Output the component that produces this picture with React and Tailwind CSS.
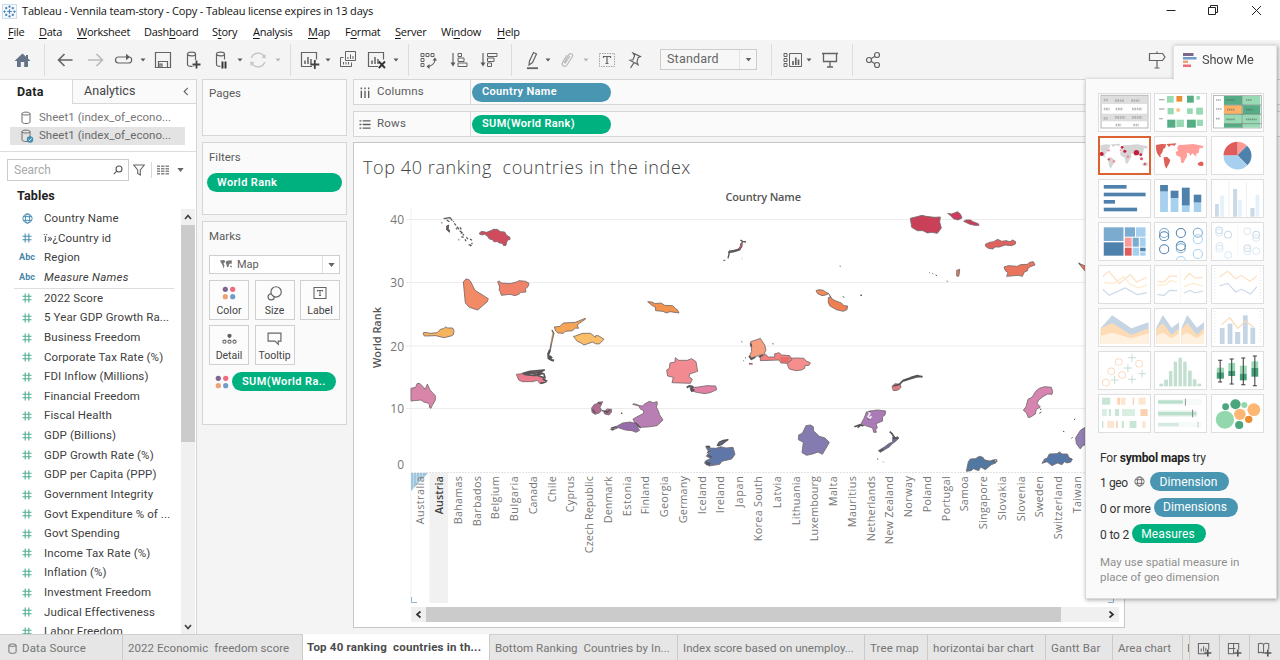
import React from "react";

const line = { fill: "none", stroke: "#636363", strokeWidth: 1.2 };

function Icon({ className = "", children }) {
  return (
    <svg viewBox="0 0 20 20" {...line} className={`h-5 w-5 flex-none ${className}`}>
      {children}
    </svg>
  );
}

function Caret({ className = "", color = "#5b5b5b" }) {
  return (
    <svg viewBox="0 0 6 4" className={`h-1 w-1.5 flex-none ${className}`}>
      <path d="M0.5 0.5H5.5L3 3.5Z" fill={color} />
    </svg>
  );
}

const Sep = ({ className = "" }) => <div className={`h-8 w-px flex-none bg-[#dcdcdc] ${className}`} />;

const MENU = [
  ["", "F", "ile", "w-[31px]"],
  ["", "D", "ata", "w-[38px]"],
  ["", "W", "orksheet", "w-[67px]"],
  ["Dash", "b", "oard", "w-[68px]"],
  ["S", "t", "ory", "w-[41px]"],
  ["", "A", "nalysis", "w-[55px]"],
  ["", "M", "ap", "w-[37px]"],
  ["F", "o", "rmat", "w-[50px]"],
  ["", "S", "erver", "w-[46px]"],
  ["Wi", "n", "dow", "w-[56px]"],
  ["", "H", "elp", "w-[40px]"],
];

function TitleBar() {
  return (
    <div className="flex h-[22px] flex-none items-center bg-white">
      <svg viewBox="0 0 16 16" className="ml-[2px] h-[15px] w-[15px]" fill="none" stroke="#4b85b8" strokeWidth="1.3">
        <rect x="0.5" y="0.5" width="15" height="15" stroke="#c9dcec" strokeWidth="1" fill="#f3f8fc" />
        <path d="M8 5.5V10.5M5.5 8H10.5M8 1.5V4M6.8 2.7H9.2M8 12V14.5M6.8 13.3H9.2M1.5 8H4M2.7 6.8V9.2M12 8H14.5M13.3 6.8V9.2M4.5 3.3V5.7M3.3 4.5H5.7M11.5 3.3V5.7M10.3 4.5H12.7M4.5 10.3V12.7M3.3 11.5H5.7M11.5 10.3V12.7M10.3 11.5H12.7" />
      </svg>
      <span className="ml-[5px] whitespace-pre font-['Open_Sans','Noto_Sans',sans-serif] text-[11px] tracking-[-0.18px] text-[#111]">
        Tableau - Vennila team-story - Copy - Tableau license expires in 13 days
      </span>
      <svg viewBox="0 0 100 20" className="ml-auto mr-[15px] h-5 w-[100px]" fill="none" stroke="#222" strokeWidth="1">
        <path d="M1.500 9.500H10.500" />
        <path d="M43.500 6.500H50.500V13.500H43.500ZM45.500 6.500V4.500H52.500V11.500H50.500" />
        <path d="M87 5L96 14M96 5L87 14" />
      </svg>
    </div>
  );
}

function MenuBar() {
  return (
    <div className="flex h-[18px] flex-none items-center bg-white pl-2 pt-[2px] font-['Open_Sans','Noto_Sans',sans-serif] text-[11px] tracking-[-0.25px] text-[#111]">
      {MENU.map(([a, u, b, w]) => (
        <div key={a + u + b} className={`${w} flex-none whitespace-pre`}>
          {a}
          <span className="underline underline-offset-2">{u}</span>
          {b}
        </div>
      ))}
    </div>
  );
}

const cylinder = "M4.500 4V14.500C4.500 17 12.500 17 12.500 14.500V4M4.500 4C4.500 1.500 12.500 1.500 12.500 4C12.500 6.500 4.500 6.500 4.500 4Z";

function Toolbar() {
  return (
    <div className="flex h-[39px] flex-none items-center bg-[#f4f4f4]">
      <Icon className="ml-[13px]">
        <path d="M9.500 3.500L1.500 11H4V17H7.800V12H11.200V17H15V11H17.500L15 8.500V5H13V6.700Z" fill="#647387" stroke="none" />
      </Icon>
      <Sep className="ml-[11px]" />
      <Icon className="ml-[10px]">
        <path d="M3.500 10H17.500M9.500 4L3.500 10L9.500 16" strokeWidth="1.600" />
      </Icon>
      <Icon className="ml-[11px]">
        <path d="M2 10H16M10.500 4L16.500 10L10.500 16" stroke="#b9b9b9" strokeWidth="1.600" />
      </Icon>
      <Icon className="ml-[8px]">
        <path d="M12.500 7H4.500C0.500 7 0.500 13 4.500 13H14.500C18.500 13 18.500 7.500 15.500 7" strokeWidth="1.200" />
        <path d="M12 3.800V10.200L16 7Z" fill="#5b5b5b" stroke="none" />
      </Icon>
      <Caret className="ml-[6px]" />
      <Icon className="ml-[7px]">
        <path d="M2.500 2.500H17.500V17.500H2.500ZM5.500 17.500V11.500H14.500V17.500M9 17V14H7V17" />
      </Icon>
      <Icon className="ml-[10px]">
        <path d={cylinder} />
        <path d="M13.500 10V19M9 14.500H18" stroke="#f4f4f4" strokeWidth="4" />
        <path d="M13.500 10.500V18.500M9.500 14.500H17.500" stroke="#444" strokeWidth="1.800" />
      </Icon>
      <Icon className="ml-[9px]">
        <path d={cylinder} />
        <path d="M8.500 9.500H16V20H8.500Z" fill="#f4f4f4" stroke="none" />
        <path d="M10.500 11.500V18.500M13.500 11.500V18.500" stroke="#333" strokeWidth="1.900" />
      </Icon>
      <Caret className="ml-[5px]" />
      <Icon className="ml-[5px]">
        <g stroke="#c4c4c4" strokeWidth="1.400">
          <path d="M3.300 8C5 2 13.500 1.500 16.300 7M16.700 12C15 18 6.500 18.500 3.700 13" />
          <path d="M17.500 4V8.500L13.500 7.500ZM2.500 16V11.500L6.500 12.500Z" fill="#c4c4c4" stroke="none" />
        </g>
      </Icon>
      <Caret className="ml-[7px]" color="#b5b5b5" />
      <Sep className="ml-[9px]" />
      <Icon className="ml-[9px]">
        <path d="M12 16.500H1.500V2.500H16.500V9.500" />
        <path d="M5 14V10.500M8 14V7M11 14V9" strokeWidth="1.500" />
        <path d="M14.800 10V19M10.300 14.500H19.300" stroke="#444" strokeWidth="1.800" />
      </Icon>
      <Caret className="ml-[5px]" />
      <Icon className="ml-[7px]">
        <path d="M7.500 1.500H17.500V10.500H7.500ZM5.500 7.500H2.500V16.500H13.500V12.500M10 9V7M12.500 9V4.500M15 9V6M5.500 14.500V12M8 14.500V12M10.500 14.500V12" strokeWidth="1" />
      </Icon>
      <Icon className="ml-[9px]">
        <path d="M11 16.500H1.500V2.500H16.500V9.500" />
        <path d="M5 14V10.500M8 14V7M11 14V9" strokeWidth="1.500" />
        <path d="M11.800 11.500L18 18M18 11.500L11.800 18" stroke="#333" strokeWidth="1.900" />
      </Icon>
      <Caret className="ml-[6px]" />
      <Sep className="ml-[9px]" />
      <Icon className="ml-[9px]">
        <path d="M3 3.500H6V6.500H3ZM8 3.500H11V6.500H8ZM13 3.500H16V6.500H13ZM3 8.500H6V11.500H3ZM3 13.500H6V16.500H3Z" strokeWidth="1" />
        <path d="M17 9C17 13 14 16 9.500 16.500" />
        <path d="M14.500 10.500L17 7.500L19 10.500ZM11.500 14L8.500 16.500L11.500 19Z" fill="#5b5b5b" stroke="none" />
      </Icon>
      <Icon className="ml-[11px]">
        <path d="M4 3V13" />
        <path d="M1.500 12.500H6.500L4 16.500Z" fill="#5b5b5b" stroke="none" />
        <path d="M9 3.500H12.500V6.500H9ZM9 8H15V11.500H9ZM9 13H18V16.500H9Z" strokeWidth="1" />
      </Icon>
      <Icon className="ml-[10px]">
        <path d="M4 3V13" />
        <path d="M1.500 12.500H6.500L4 16.500Z" fill="#5b5b5b" stroke="none" />
        <path d="M8.500 3.500H18V6.500H8.500ZM8.500 8H15V11.500H8.500ZM8.500 13H12.500V16.500H8.500Z" strokeWidth="1" />
      </Icon>
      <Sep className="ml-[12px]" />
      <Icon className="ml-[10px]">
        <path d="M7.500 11L11.500 2.500L14.500 4L10.500 12.500L7 15Z" />
        <path d="M5 18.200H16" strokeWidth="1.800" />
      </Icon>
      <Caret className="ml-[3px]" />
      <Icon className="ml-[6px]">
        <path d="M7 13L12 4.500C14 2.500 16.500 4.500 15.500 6.500L10 15C8 17.500 4 16 5.500 12.500L10 5M8 13.500L13 6" stroke="#b9b9b9" />
      </Icon>
      <Caret className="ml-[6px]" color="#b5b5b5" />
      <Icon className="ml-[8px]">
        <path d="M2.500 3.500H17.500V16.500H2.500Z" stroke="#a5a5a5" strokeWidth="1" strokeDasharray="1.500 1" />
        <path d="M6.500 8V6.500H13.500V8M10 6.500V13.500M8.500 13.500H11.500" />
      </Icon>
      <Icon className="ml-[7px]">
        <path d="M10.500 3L17 8L14.500 8.500L12.500 12.500L13 15.500L6 9.500L9 9.500L11.500 6ZM9.500 12.500L5 17" transform="rotate(-12 10 10)" />
      </Icon>
      <div className="ml-[16px] flex h-[21px] w-[97px] flex-none items-center border border-[#cccccc] bg-[#f7f7f7] pl-[6px] text-[12.500px] tracking-[0.2px] text-[#666]">
        Standard
        <div className="ml-auto flex h-full w-[17px] items-center justify-center border-l border-[#e4e4e4]">
          <svg viewBox="0 0 8 5" className="h-[4px] w-[7px]"><path d="M0.500 0H7.500L4 4.500Z" fill="#666" /></svg>
        </div>
      </div>
      <Sep className="ml-[14px]" />
      <Icon className="ml-[11px]">
        <path d="M1 3.500H4V6.500H1ZM1 8.500H4V11.500H1ZM1 13.500H4V16.500H1ZM6.500 3.500H18.500V16.500H6.500Z" strokeWidth="1" />
        <path d="M10 15V11M12.800 15V7.500M15.500 15V9.500" strokeWidth="1.700" />
      </Icon>
      <Caret className="ml-[3px]" />
      <Icon className="ml-[8px]">
        <path d="M2 3.500H18M3.500 3.500V11.500H16.500V3.500M10 11.500V16.500M7 17H13" strokeWidth="1.300" />
      </Icon>
      <Sep className="ml-[12px]" />
      <Icon className="ml-[10px]">
        <circle cx="6" cy="10" r="2.500" />
        <circle cx="14" cy="5" r="2.500" />
        <circle cx="14" cy="15" r="2.500" />
        <path d="M8 8.800L12 6.300M8 11.200L12 13.700" />
      </Icon>
      <Icon className="ml-[264px]">
        <path d="M2.500 3.500H15.500L18 7L15.500 10.500H2.500ZM10 1.500V3.500M10 10.500V18M7.500 18H12.500" />
      </Icon>
    </div>
  );
}

function Cyl({ checked }) {
  return (
    <svg viewBox="0 0 14 14" className="h-[14px] w-[14px] flex-none" fill="none" stroke="#6b6b6b">
      <path d="M2 2.700V11C2 13 10 13 10 11V2.700M2 2.700C2 0.600 10 0.600 10 2.700C10 4.500 2 4.500 2 2.700Z" />
      {checked && <circle cx="10" cy="10.500" r="3.200" fill="#3f8cb0" stroke="none" />}
      {checked && <path d="M8.500 10.500L9.700 11.700L11.600 9.300" stroke="#fff" strokeWidth="0.900" />}
    </svg>
  );
}

function Globe({ color }) {
  return (
    <svg viewBox="0 0 12 12" className="h-[11px] w-[11px] flex-none" fill="none" stroke={color} strokeWidth="1">
      <circle cx="6" cy="6" r="5" />
      <ellipse cx="6" cy="6" rx="2.300" ry="5" />
      <path d="M1.500 4H10.500M1.500 8H10.500" />
    </svg>
  );
}

function Hash({ color }) {
  return (
    <svg viewBox="0 0 11 11" className="h-[10px] w-[10px]" fill="none" stroke={color} strokeWidth="1.200">
      <path d="M3.500 0.500V10.500M7.500 0.500V10.500M0.500 3.500H10.500M0.500 7.500H10.500" />
    </svg>
  );
}

const DIMS = [
  ["globe", "Country Name"],
  ["hash", "ï»¿Country id"],
  ["abc", "Region"],
  ["abc", "Measure Names"],
];

const MEASURES = [
  "2022 Score",
  "5 Year GDP Growth Ra...",
  "Business Freedom",
  "Corporate Tax Rate (%)",
  "FDI Inflow (Millions)",
  "Financial Freedom",
  "Fiscal Health",
  "GDP (Billions)",
  "GDP Growth Rate (%)",
  "GDP per Capita (PPP)",
  "Government Integrity",
  "Govt Expenditure % of ...",
  "Govt Spending",
  "Income Tax Rate (%)",
  "Inflation (%)",
  "Investment Freedom",
  "Judical Effectiveness",
  "Labor Freedom",
];

function Row({ kind, name }) {
  return (
    <div className="flex h-[19.630px] flex-none items-center text-[11.500px] text-[#404040]">
      <div className="ml-[17px] flex w-5 flex-none items-center justify-center">
        {kind === "globe" && <Globe color="#3a83a8" />}
        {kind === "hash" && <Hash color="#4a8fb0" />}
        {kind === "measure" && <Hash color="#4fae93" />}
        {kind === "abc" && <span className="text-[9px] font-bold text-[#4a87ad]">Abc</span>}
      </div>
      <span className={`ml-[7px] whitespace-pre ${name === "Measure Names" ? "italic tracking-[0.240px]" : "tracking-[0.110px]"}`}>
        {name}
      </span>
    </div>
  );
}

function DataPane() {
  return (
    <div className="flex w-[197px] flex-none flex-col border-r border-[#d4d4d4] bg-white">
      <div className="flex h-[25px] flex-none">
        <div className="flex w-[72px] items-center border-t border-[#e0e0e0] pl-[17px] text-[12.500px] font-bold tracking-[0.200px] text-[#222]">Data</div>
        <div className="flex flex-1 items-center border-b border-l border-t border-[#d8d8d8] bg-[#fafafa] pl-[11px] pr-[7px] text-[12.500px] tracking-[0.050px] text-[#444]">
          Analytics
          <svg viewBox="0 0 6 10" className="ml-auto h-[9px] w-[6px]" fill="none" stroke="#666" strokeWidth="1.300"><path d="M5 1L1 5L5 9" /></svg>
        </div>
      </div>
      <div className="flex h-[48px] flex-none flex-col border-b border-[#dcdcdc] pl-[10px] pr-[11px] pt-[4px] text-[11.500px] tracking-[0.030px] text-[#777]">
        <div className="flex h-[18px] items-center gap-[5px] pl-[10px] pt-px"><Cyl />Sheet1 (index_of_econo...</div>
        <div className="mt-px flex h-[18px] items-center gap-[5px] bg-[#e3e3e3] pl-[10px] text-[#6a6a6a]"><Cyl checked />Sheet1 (index_of_econo...</div>
      </div>
      <div className="flex h-[35px] flex-none items-center pl-[7px]">
        <div className="flex h-[22px] w-[122px] items-center border border-[#cccccc] pl-[6px] text-[12px] text-[#aaa]">
          Search
          <svg viewBox="0 0 10 10" className="ml-auto mr-[5px] h-[10px] w-[10px]" fill="none" stroke="#555" strokeWidth="1.100"><circle cx="6" cy="4" r="3" /><path d="M3.800 6.200L0.800 9.200" /></svg>
        </div>
        <svg viewBox="0 0 12 12" className="ml-1 h-3 w-3" fill="none" stroke="#666" strokeWidth="1.100"><path d="M0.700 1H11.300L7.300 6V11L4.700 9.500V6Z" /></svg>
        <div className="ml-[6px] h-4 w-px bg-[#d8d8d8]" />
        <svg viewBox="0 0 12 10" className="ml-[5px] h-[10px] w-3" fill="none" stroke="#888" strokeWidth="1.400"><path d="M0 1.200H3M4 1.200H7.500M8.500 1.200H12M0 3.700H3M4 3.700H7.500M8.500 3.700H12M0 6.200H3M4 6.200H7.500M8.500 6.200H12M0 8.700H3M4 8.700H7.500M8.500 8.700H12" /></svg>
        <svg viewBox="0 0 8 5" className="ml-[8px] h-[4px] w-[7px]"><path d="M0 0H8L4 5Z" fill="#666" /></svg>
      </div>
      <div className="flex h-[20px] flex-none items-center pb-px pl-[17px] text-[12.500px] font-bold tracking-[0.150px] text-[#222]">Tables</div>
      <div className="flex min-h-0 flex-1">
        <div className="flex w-[181px] flex-none flex-col overflow-hidden pt-[2px]">
          {DIMS.map(([k, n]) => <Row key={n} kind={k} name={n} />)}
          <div className="ml-[14px] h-px w-[160px] flex-none self-start bg-[#dedede]" />
          {MEASURES.map((n) => <Row key={n} kind="measure" name={n} />)}
        </div>
        <div className="mt-[2px] flex w-[14px] flex-none flex-col bg-[#f0f0f0]">
          <div className="flex h-[16px] items-center justify-center">
            <svg viewBox="0 0 8 6" className="h-[6px] w-2" fill="none" stroke="#444" strokeWidth="1.700"><path d="M1 5L4 1.500L7 5" /></svg>
          </div>
          <div className="h-[217px] bg-[#cbcbcb]" />
          <div className="mt-auto flex h-[15px] items-center justify-center">
            <svg viewBox="0 0 8 6" className="h-[6px] w-2" fill="none" stroke="#444" strokeWidth="1.700"><path d="M1 1L4 4.500L7 1" /></svg>
          </div>
        </div>
      </div>
    </div>
  );
}

function Dots() {
  return (
    <svg viewBox="0 0 14 14" className="h-[14px] w-[14px] flex-none">
      <circle cx="3.300" cy="3.300" r="2.600" fill="#7b668c" />
      <circle cx="10.700" cy="3.300" r="2.600" fill="#ee6a7d" />
      <circle cx="3.300" cy="10.700" r="2.600" fill="#f0a275" />
      <circle cx="10.700" cy="10.700" r="2.600" fill="#729bcc" />
    </svg>
  );
}

function MarkButton({ label, children }) {
  return (
    <div className="flex h-[40px] w-[40px] flex-none flex-col items-center justify-between border border-[#d0d0d0] bg-[#fcfcfc] pb-px pt-[5px] text-[10.500px] leading-[14px] text-[#444]">
      {children}
      <span>{label}</span>
    </div>
  );
}

const card = "flex flex-none flex-col border border-[#d6d6d6] bg-[#fafafa]";

function Cards() {
  return (
    <div className="flex w-[156px] flex-none flex-col gap-[6px] pl-[5px] pr-[6px] text-[11.500px] text-[#5c5c5c]">
      <div className={`${card} h-[57px] pl-[6px] pt-[5px]`}>Pages</div>
      <div className={`${card} h-[73px] pl-[6px] pr-[4px] pt-[6px]`}>
        Filters
        <div className="-ml-[2px] mt-[7px] flex h-[19px] items-center rounded-full bg-[#00b180] pl-[10px] text-[11px] font-semibold tracking-[0.400px] text-white">World Rank</div>
      </div>
      <div className={`${card} h-[204px] pl-[6px] pr-[6px] pt-[6px]`}>
        Marks
        <div className="mt-[10px] flex h-[19px] items-center border border-[#cfcfcf] bg-white pl-[10px] text-[11px] text-[#5c5c5c]">
          <svg viewBox="0 0 12 9" className="mr-[5px] h-[9px] w-3" fill="#777"><path d="M0 0.500L4 0L5.500 1.500L3.500 3.500L4.500 5.500L3.500 8.500L2.500 5L1 2.500ZM6 1.500L8 0.500L12 0.500L11.500 4L10 3.500L9 4.500L8.500 7L7 7L6.500 4.500L5.800 3.500ZM10.500 5.500L12 6L11.500 7.500L10.200 7Z" /></svg>
          Map
          <div className="ml-auto flex h-full w-[17px] items-center justify-center border-l border-[#e0e0e0]">
            <svg viewBox="0 0 8 5" className="h-[4px] w-[7px]"><path d="M0 0H8L4 5Z" fill="#666" /></svg>
          </div>
        </div>
        <div className="mt-[6px] grid grid-cols-[40px_40px_40px] gap-x-[5.500px] gap-y-[5px]">
          <MarkButton label="Color"><Dots /></MarkButton>
          <MarkButton label="Size">
            <svg viewBox="0 0 14 14" className="h-[15px] w-[15px]" fill="none" stroke="#666" strokeWidth="1.100"><circle cx="8.500" cy="5.500" r="4.800" /><path d="M3.900 7.200A2.900 2.900 0 1 0 6.800 10.200" /></svg>
          </MarkButton>
          <MarkButton label="Label">
            <svg viewBox="0 0 14 14" className="h-[14px] w-[14px]" fill="none" stroke="#666" strokeWidth="1.100"><path d="M1 1.500H13V12.500H1ZM4.500 5.500V4.500H9.500V5.500M7 4.500V9.500M6 9.500H8" /></svg>
          </MarkButton>
          <MarkButton label="Detail">
            <svg viewBox="0 0 14 14" className="h-[15px] w-[15px]" fill="none" stroke="#666" strokeWidth="1"><circle cx="7" cy="4.500" r="1.500" fill="#555" /><circle cx="2.300" cy="10" r="1.500" /><circle cx="7" cy="10" r="1.500" /><circle cx="11.700" cy="10" r="1.500" /></svg>
          </MarkButton>
          <MarkButton label="Tooltip">
            <svg viewBox="0 0 14 14" className="h-[15px] w-[15px]" fill="none" stroke="#666" strokeWidth="1.100"><path d="M1 2H13V9.500H10.500V12.500L7.500 9.500H1Z" /></svg>
          </MarkButton>
        </div>
        <div className="mt-[7px] flex items-center pl-[6px]">
          <Dots />
          <div className="ml-[3px] flex h-[19px] w-[104px] items-center rounded-full bg-[#00b180] pl-[10px] text-[11px] font-semibold tracking-[0.400px] text-white">SUM(World Ra..</div>
        </div>
      </div>
    </div>
  );
}

function Shelf({ label, rows, pill, color }) {
  return (
    <div className="flex h-[26px] flex-none items-center border border-r-0 border-[#d6d6d6] bg-[#fafafa] text-[11.500px] tracking-[0.200px] text-[#5c5c5c]">
      <div className="flex h-full w-[117px] items-center border-r border-[#d9d9d9] pl-[5px]">
        <svg viewBox="0 0 12 12" className="mr-[6px] h-[11px] w-[12px]" fill="none" stroke="#5c5c5c" strokeWidth="1.500">
          {rows ? (
            <path d="M0 2H2M3.500 2H12M0 6H2M3.500 6H12M0 10H2M3.500 10H12" />
          ) : (
            <path d="M2 0.500V2.500M2 4V12M6 0.500V2.500M6 4V12M10 0.500V2.500M10 4V12" />
          )}
        </svg>
        {label}
      </div>
      <div className={`ml-[1px] flex h-[19px] w-[139px] items-center rounded-full pl-[10px] text-[11px] font-semibold tracking-[0.350px] text-white ${color}`}>{pill}</div>
    </div>
  );
}

/* name, rendered length along the axis */
const COUNTRIES = [
  ["Australia", 48], ["Austria", 38], ["Bahamas", 48], ["Barbados", 50], ["Belgium", 43], ["Bulgaria", 45],
  ["Canada", 38], ["Chile", 26], ["Cyprus", 36], ["Czech Republic", 77], ["Denmark", 47], ["Estonia", 40],
  ["Finland", 38], ["Georgia", 41], ["Germany", 47], ["Iceland", 38], ["Ireland", 37], ["Japan", 31],
  ["Korea South", 65], ["Latvia", 32], ["Lithuania", 49], ["Luxembourg", 65], ["Malta", 30], ["Mauritius", 51],
  ["Netherlands", 65], ["New Zealand", 68], ["Norway", 41], ["Poland", 36], ["Portugal", 45], ["Samoa", 35],
  ["Singapore", 53], ["Slovakia", 44], ["Slovenia", 45], ["Sweden", 41], ["Switzerland", 63], ["Taiwan", 37],
];

/* outlines are drawn on a grid three times finer than the page */
const SHAPES_A = [
  ["#cf4b5e", "M387 101L394 94L410 97L425 91L430 88L441 88L452 95L464 96L470 106L480 112L480 119L474 119L470 127L468 136L461 137L457 130L448 129L441 124L433 126L427 119L418 117L412 108L404 103L396 105Z"],
  ["#f28a66", "M340 246L348 237L355 238L361 243L375 271L415 296L411 306L383 330L358 322L346 309Z"],
  ["#f0826a", "M443 245L448 243L453 249L480 251L500 246L507 242L527 244L537 250L534 260L526 267L528 276L512 277L508 282L495 287L480 283L454 286L451 275L447 271L449 261Z"],
  ["#f7b45f", "M219 399L225 397L240 400L262 398L271 388L280 386L287 381L293 384L308 384L312 393L310 404L303 408L282 413L258 407L223 408Z"],
  ["#f5a555", "M613 381L630 379L640 369L660 368L676 367L706 355L707 357L682 374L685 385L676 384L668 392L646 394L640 400L624 399L617 393Z"],
  ["#fabd68", "M670 409L676 408L697 400L722 400L736 412L738 406L747 408L762 418L748 432L736 431L728 426L702 435L690 427L683 425Z"],
  ["#d985a9", "M183 565L197 562L201 551L209 550L219 560L226 568L232 552L240 570L256 587L256 600L247 616L243 625L238 622L239 615L233 609L221 606L213 600L193 602L183 603Z"],
  ["#ec7a8d", "M499 523L516 521L540 526L570 528L580 534L588 547L570 551L562 541L548 545L517 545L506 540Z"],
  ["#af6b92", "M725 624L733 613L740 612L744 607L758 605L754 614L750 622L755 631L748 639L735 643L726 637ZM761 635L772 627L785 628L784 637L777 645L764 642Z"],
  ["#b77fb4", "M848 613L852 611L870 617L877 618L884 612L898 604L910 608L921 605L922 612L919 621L927 637L928 643L939 660L921 677L893 681L869 682L857 678L855 670L849 657L860 651L881 640L880 631L872 628L866 618Z"],
  ["#976cad", "M781 688L800 679L818 669L840 666L856 670L865 674L862 681L869 691L858 697L846 692L826 690L805 683L788 690Z"],
];

const SHAPES_B = [
  ["#f2934f", "M53 305L66 306L75 311L93 309L104 316L128 317L137 326L142 329L147 339L120 335L109 339L99 334L77 332L76 321L67 317Z"],
  ["#ef8a59", "M558 272L567 269L580 271L587 276L597 281L587 285L576 287L563 281Z"],
  ["#ef7f51", "M595 293L602 290L606 297L618 303L634 309L642 317L653 318L651 329L640 334L619 329L600 318L595 308Z"],
  ["#f6a080", "M362 425L374 421L381 419L391 415L396 423L404 435L408 450L401 464L386 466L369 474L358 469L365 454Z"],
  ["#f58e8c", "M476 475L500 474L522 475L528 483L541 488L537 496L525 497L524 505L514 510L497 512L478 507L472 494Z"],
  ["#f47f7f", "M391 468L407 463L415 471L435 471L433 462L447 458L455 465L479 467L486 479L471 490L453 489L447 480L391 482Z"],
  ["#f28b91", "M120 489L135 486L136 473L146 481L172 481L185 476L198 485L203 514L179 522L177 530L187 538L181 550L126 548L130 532L113 528L110 510L118 505Z"],
  ["#e180a4", "M180 563L206 561L230 557L257 558L260 569L243 577L225 581L199 577L182 571Z"],
  ["#5f76a8", "M227 739L239 738L239 744L258 745L272 740L288 744L309 742L315 763L305 777L276 784L269 793L237 798L224 790L226 783L242 775L229 769L233 762L241 757L233 751Z"],
  ["#847bb0", "M528 677L541 675L550 680L551 693L568 709L585 714L598 727L592 738L577 763L564 756L551 761L530 766L516 758L520 727L505 719L506 705L517 700Z"],
  ["#aa7bb6", "M702 655L710 635L727 632L743 630L767 633L765 645L757 651L758 663L738 671L742 683L737 689L739 697L731 697L728 684L704 676L690 677Z"],
  ["#6c6b9b", "M788 711L796 714L803 710L807 714L798 723L785 733L779 740L751 757L745 752L763 741L778 730L788 726Z"],
  ["#e27a83", "M786 559L795 551L811 553L813 562L805 570L790 572Z"],
];

const SHAPES_C = [
  ["#c94058", "M151 55L171 50L186 46L198 49L223 52L241 51L239 66L244 84L232 100L215 97L202 99L189 92L172 92L155 82Z"],
  ["#cf3b5c", "M263 40L275 42L293 35L301 42L306 54L294 60L280 56L273 48Z"],
  ["#cb3d58", "M311 64L319 60L331 60L339 65L355 71L357 76L344 76L330 73Z"],
  ["#df625e", "M376 133L389 127L401 125L413 118L425 124L438 122L450 125L458 120L467 125L466 132L455 137L435 135L419 141L405 141L399 147L385 145L377 139Z"],
  ["#ea755c", "M432 201L445 197L472 199L481 194L502 193L509 187L520 185L525 195L511 200L503 206L503 212L493 216L487 229L475 226L440 229L444 218L436 212Z"],
  ["#d98065", "M290 211L299 208L298 220L296 229L290 228Z"],
  ["#ea755c", "M656 190L676 198V214L668 205Z"],
  ["#d685b1", "M504 598L517 591L527 574L538 565L554 560L574 562L578 575L576 583L563 582L549 590L536 600L531 610L541 621L529 628L526 642L512 651L505 653L499 638L490 631L498 620Z"],
  ["#5078a0", "M319 814L325 785L331 777L346 776L358 769L369 772L373 779L388 783L403 780L407 789L394 794L376 809L362 801L356 812L340 806L334 812Z"],
  ["#5676a7", "M546 790L554 777L562 774L568 762L591 761L599 756L606 762L622 762L628 774L635 777L633 786L621 789L613 785L606 794L592 789L576 797L561 785Z"],
  ["#927fb3", "M676 682L662 690L647 713L649 731L661 747L668 737L676 734Z"],
];

function Shapes({ x, data, children }) {
  return (
    <g transform={`translate(${x} 200) scale(0.33333)`} stroke="#776b6c" strokeWidth="2.600" strokeLinejoin="round">
      {data.map(([f, d]) => <path key={d} d={d} fill={f} />)}
      {children}
    </g>
  );
}

function Chart() {
  return (
    <svg viewBox="354 183 770 422" className="h-[422px] w-[770px] flex-none font-['Open_Sans','Noto_Sans',sans-serif]">
      <text x="725.500" y="201.200" fontSize="11" fontWeight="600" fill="#555" textLength="75.500">Country Name</text>
      <text transform="translate(381 368) rotate(-90)" fontSize="11" fontWeight="600" fill="#555" textLength="61">World Rank</text>
      {[["40", 219.500], ["30", 282.500], ["20", 346], ["10", 408.500]].map(([t, y]) => (
        <g key={t}>
          <path d={`M406 ${y}H1124`} stroke="#ececec" />
          <text x="404" y={y + 4.500} fontSize="12" fill="#777" textAnchor="end">{t}</text>
        </g>
      ))}
      <text x="404" y="468.600" fontSize="12" fill="#777" textAnchor="end">0</text>
      <path d="M411 208V604" stroke="#f1f1f1" />
      <path d="M411 472.500H1124" stroke="#e2e2e2" strokeDasharray="2 1" />
      <rect x="429.500" y="473" width="18.500" height="130" fill="#f1f1f1" />
      <path d="M411 473H428L411 491Z" fill="#a0c5de" />
      <path d="M413.500 473V488M416.500 473V485M419.500 473V482M422.500 473V479" stroke="#c6deed" strokeWidth="0.800" />
      <path d="M411.500 597V602.500H417M1113.500 597V602.500H1108" fill="none" stroke="#8db6d2" />
      {COUNTRIES.map(([n, len], i) => (
        <text
          key={n}
          transform={`translate(${424.300 + i * 18.760} ${476.200 + len}) rotate(-90)`}
          fontSize="10.800"
          fontWeight={n === "Austria" ? 600 : 400}
          fill={n === "Austria" ? "#444" : "#777"}
          textLength={len}
        >
          {n}
        </text>
      ))}
      <Shapes x={350} data={SHAPES_A}>
        <g fill="none" stroke="#555">
          <path d="M281 56L300 53L307 62M290 60L298 65M274 69L277 68M289 80L296 76L292 86L299 97M292 76L290 90M313 70L318 76M310 64L312 66M321 80L327 88M329 92L337 98L332 100M338 102L342 106M334 110L341 112M349 112L354 117M360 117L366 121M364 130L368 131M356 134L364 136L360 138M325 119L328 120M330 82L334 88M318 84L321 88M345 118L348 124" strokeWidth="3.600" />
          <path d="M294 78L292 87L298 94" strokeWidth="7" stroke="#66585a" />
          <path d="M606 390L611 400L605 425L600 452" strokeWidth="5" stroke="#7d716a" />
          <path d="M608 398L603 430" strokeWidth="2" stroke="#d9a070" />
          <path d="M600 450L595 462L596 475L605 480L612 482M599 468L606 475" strokeWidth="7" />
          <path d="M517 521L540 514L583 510L566 518L582 522L585 534L570 529L547 518L524 523L552 526L580 520M578 537L592 544M572 550L588 545" strokeWidth="5" />
          <path d="M530 520L575 515L560 524" strokeWidth="6" stroke="#5c5256" />
          <path d="M783 684L800 680M785 690L792 688M813 638L817 641M756 632L776 636M767 640L780 630M856 668L872 684M744 608L754 612M728 628L736 640" strokeWidth="3.500" />
        </g>
      </Shapes>
      <Shapes x={630} data={SHAPES_B}>
        <g fill="none" stroke="#555">
          <path d="M331 120L338 124L348 126M337 125L334 138L329 149L305 153L298 158L294 175" strokeWidth="4" />
          <path d="M296 159L300 154L306 155L320 151L330 147" strokeWidth="7" stroke="#5f5a5c" />
          <path d="M280 181L286 181" strokeWidth="3" />
          <path d="M336 173L337 179" strokeWidth="2" stroke="#bbb" />
          <path d="M333 130L334 138L327 149" strokeWidth="7" stroke="#7a5a5e" />
          <path d="M333 132L333 138L326 147" strokeWidth="3" stroke="#c4606a" />
          <path d="M598 283L602 292M638 290L643 292M692 285L696 286M629 198L632 199M334 425L337 426M427 431L431 432M340 482L342 483M345 473L348 474" strokeWidth="3" />
          <path d="M357 491L368 492" strokeWidth="5" stroke="#94686c" />
          <path d="M361 430L365 440M357 468L364 478L376 471M386 471L398 466" strokeWidth="5" />
          <path d="M452 474L478 474L470 486L455 484Z" fill="#ee6d64" stroke="#c96a63" strokeWidth="2" />
          <path d="M170 563L178 558L188 560L184 568L191 570L183 574" strokeWidth="6" />
          <path d="M790 558L808 553L820 541L842 533L862 527L878 531M820 543L858 531L877 529" strokeWidth="5" />
          <path d="M262 736L268 726L280 721L294 719L284 726L276 733L265 737Z" fill="#5f6a90" strokeWidth="4" />
          <path d="M229 740L240 741M228 793L242 789M232 759L238 753M236 766L245 772M228 786L240 794" strokeWidth="5" />
          <path d="M673 680L690 674L700 678M683 683L690 677M779 695L785 700L794 713M789 715L803 713M749 754L760 748" strokeWidth="5" />
          <path d="M742 775L744 779M759 785L761 787" strokeWidth="3" />
          <path d="M712 634L720 640L714 650L720 656L724 648" strokeWidth="5" stroke="#f1ecf4" />
          <path d="M709 640L713 636L723 634M712 656L722 659" strokeWidth="2.500" />
        </g>
      </Shapes>
      <Shapes x={860} data={SHAPES_C}>
        <g fill="none" stroke="#555" strokeWidth="3">
          <path d="M207 218L209 218M217 220L220 222M227 225L231 227M260 243L263 244M1 286L6 286M397 781L410 779L411 785L403 787M541 626L543 630M538 640L544 636M609 694L613 695M634 715L638 712M643 660L645 656M657 188L662 194M628 774L638 779" />
        </g>
      </Shapes>
    </svg>
  );
}

function Worksheet() {
  return (
    <div className="flex min-w-0 flex-1 flex-col">
      <Shelf label="Columns" pill="Country Name" color="bg-[#4996b2]" />
      <div className="h-[6px] flex-none" />
      <Shelf rows label="Rows" pill="SUM(World Rank)" color="bg-[#00b180]" />
      <div className="mt-[5px] flex h-[486px] w-[772px] flex-none flex-col border border-[#c6c6c6] bg-white">
        <div className="h-[40px] flex-none whitespace-pre pl-[9px] pt-[10px] font-['Open_Sans','Noto_Sans',sans-serif] text-[18px] font-light leading-[28px] tracking-[0.600px] text-[#444]">
          Top 40 ranking  countries in the index
        </div>
        <Chart />
        <div className="ml-[57px] mt-[2px] flex h-[15px] w-[708px] flex-none items-center bg-[#f0f0f0]">
          <svg viewBox="0 0 15 15" className="h-[15px] w-[15px]" fill="none" stroke="#333" strokeWidth="1.700"><path d="M9.500 4.500L6 7.500L9.500 10.500" /></svg>
          <div className="h-full w-[635px] bg-[#cbcbcb]" />
          <svg viewBox="0 0 15 15" className="ml-auto h-[15px] w-[15px]" fill="none" stroke="#333" strokeWidth="1.700"><path d="M5.500 4.500L9 7.500L5.500 10.500" /></svg>
        </div>
      </div>
    </div>
  );
}

function Thumb({ x, y, active, children }) {
  return (
    <svg
      viewBox={active ? `${x + 6} ${y + 6} 144 105` : `${x + 3} ${y + 3} 150 111`}
      preserveAspectRatio="none"
      className={`h-[39px] w-[53px] bg-white ${active ? "border-2 border-[#dc6231]" : "border border-[#dedede]"}`}
    >
      {children}
    </svg>
  );
}

const Rects = ({ items }) => items.map(([x, y, w, h, f], i) => <rect key={i} x={x} y={y} width={w} height={h} fill={f} />);
const Circles = ({ items, r, color, w = 3 }) =>
  items.map(([x, y, c], i) => <circle key={i} cx={x} cy={y} r={r} fill="none" stroke={c || color} strokeWidth={w} />);

const AMERICAS = "M216 181L232 178L246 179L243 189L238 192L234 204L228 212L232 218L226 216L219 206L216 193ZM247 178L276 176L271 183L260 181L254 187ZM238 218L249 217L258 226L255 236L250 244L247 252L242 244L240 232Z";
const EURASIA = "M278 190L283 181L300 180L325 178L340 181L356 184L352 191L344 190L341 206L335 206L334 216L328 210L322 206L318 214L312 204L306 206L308 214L302 224L296 236L290 234L288 218L276 212L274 202L281 198Z";
const OCEANIA = "M338 236L350 230L356 236L354 244L342 243Z";
const dk = "#4e81ab";
const lt = "#a6d0ee";

function Thumbs() {
  return (
    <div className="grid grid-cols-[53px_53px_53px] gap-x-[3.300px] gap-y-[4px]">
      <Thumb x={40} y={25}>
        <rect x="49" y="32" width="138" height="98" fill="#fff" stroke="#b5b5b5" strokeWidth="3" />
        <Rects items={[[51, 34, 134, 24, "#dedede"], [51, 87, 134, 23, "#dedede"]]} />
        <path d="M57 46H70M57 73H74M57 101H68M90 48H118M138 48H162M92 73H114M140 73H170M90 98H120M140 98H170M92 121H108M144 121H160" stroke="#a9a9a9" strokeWidth="8" strokeDasharray="5 2" opacity="0.800" />
      </Thumb>
      <Thumb x={210} y={25}>
        <Rects items={[[248, 34, 20, 20, "#98dab4"], [276, 34, 17, 17, "#ec8d36"], [307, 33, 20, 21, "#55ad86"], [335, 34, 10, 11, "#98dab4"], [250, 70, 18, 19, "#98dab4"], [276, 71, 10, 10, "#fcbf7c"], [307, 71, 17, 17, "#98dab4"], [334, 69, 20, 21, "#98dab4"], [249, 105, 24, 24, "#55ad86"], [276, 105, 22, 22, "#98dab4"], [307, 105, 26, 24, "#55ad86"], [336, 105, 18, 19, "#98dab4"]]} />
        <path d="M225 45H241M225 73H241M225 102H236" stroke="#999" strokeWidth="3" />
      </Thumb>
      <Thumb x={379} y={25}>
        <rect x="387" y="32" width="140" height="98" fill="#fff" stroke="#999" strokeWidth="2" />
        <Rects items={[[417, 34, 53, 26, "#55ad86"], [473, 34, 51, 26, "#98dab4"], [417, 62, 53, 26, "#fcb268"], [473, 62, 51, 26, "#55ad86"], [417, 90, 53, 26, "#98dab4"], [473, 90, 51, 26, "#98dab4"], [417, 118, 53, 11, "#55ad86"], [473, 118, 51, 11, "#98dab4"]]} />
        <path d="M417 61H526M417 89H526M417 117H526M471 33V130" stroke="#4c7060" strokeWidth="2" />
        <path d="M394 46H408M394 73H410M394 102H406M424 46H450M482 46H500M426 75H448M482 75H502M424 104H450M482 104H514" stroke="#555" strokeWidth="5" strokeDasharray="4 2" opacity="0.550" />
      </Thumb>
      <Thumb x={40} y={154} active>
        <g transform="translate(-169 1)" fill="#d5d5d5"><path d={AMERICAS} /><path d={EURASIA} /><path d={OCEANIA} /></g>
        <g fill="#c51f3f"><circle cx="51" cy="208" r="6" /><circle cx="153" cy="204" r="8" /><circle cx="111" cy="188" r="4" /><circle cx="119" cy="200" r="4.500" /><circle cx="166" cy="210" r="4" /></g>
        <g fill="#dd5666"><circle cx="168" cy="222" r="4.500" /><circle cx="72" cy="224" r="3.500" /><circle cx="178" cy="238" r="3.500" /></g>
        <g fill="#ee9099"><circle cx="71" cy="197" r="3.500" /><circle cx="87" cy="230" r="4" /><circle cx="128" cy="216" r="4" /><circle cx="107" cy="197" r="3" /></g>
      </Thumb>
      <Thumb x={210} y={154}>
        <path d={AMERICAS} fill="#dd5f58" /><path d={EURASIA} fill="#ff9d99" /><path d={OCEANIA} fill="#dd5f58" />
      </Thumb>
      <Thumb x={379} y={154}>
        <path d="M457 212V171A41 41 0 0 1 485 183Z" fill="#fb9a98" />
        <path d="M457 212L485 183A41 41 0 0 1 486 242Z" fill={dk} />
        <path d="M457 212L486 242A41 41 0 0 1 416 212Z" fill={lt} />
        <path d="M457 212H416A41 41 0 0 1 457 171Z" fill="#de5d5a" />
      </Thumb>
      <Thumb x={40} y={283}>
        <Rects items={[[57, 301, 67, 11, dk], [57, 324, 123, 11, dk], [57, 346, 33, 11, dk], [57, 369, 98, 11, dk]]} />
      </Thumb>
      <Thumb x={210} y={283}>
        <Rects items={[[228, 301, 23, 20, dk], [228, 321, 23, 61, lt], [259, 318, 23, 22, dk], [259, 340, 23, 42, lt], [292, 309, 23, 54, dk], [292, 363, 23, 19, lt], [327, 330, 22, 24, dk], [327, 354, 22, 28, lt]]} />
      </Thumb>
      <Thumb x={379} y={283}>
        <path d="M432 292V396M483 292V396" stroke="#eee" strokeWidth="3" />
        <Rects items={[[391, 358, 11, 38, "#cad9e6"], [406, 333, 11, 63, "#e4f1fa"], [444, 313, 12, 83, "#cad9e6"], [459, 345, 11, 51, "#e4f1fa"], [495, 370, 12, 26, "#cad9e6"], [510, 330, 11, 66, "#e4f1fa"]]} />
      </Thumb>
      <Thumb x={40} y={412}>
        <Rects items={[[57, 428, 58, 41, "#7bacd0"], [57, 473, 58, 40, dk], [119, 428, 30, 28, "#7bacd0"], [152, 428, 28, 28, lt], [119, 459, 20, 27, "#fb9a98"], [119, 489, 20, 24, "#de5d5a"], [142, 459, 18, 27, "#7bacd0"], [163, 459, 17, 27, lt], [142, 489, 19, 24, lt], [164, 489, 16, 11, dk], [164, 503, 16, 10, lt]]} />
      </Thumb>
      <Thumb x={210} y={412}>
        <Circles r={13.500} color="#7bacd0" items={[[240, 445], [240, 455, dk], [240, 494, dk], [289, 445, dk], [289, 484, dk], [289, 491], [289, 529, lt], [339, 444], [339, 464, lt], [339, 508, lt]]} />
      </Thumb>
      <Thumb x={379} y={412}>
        <path d="M457 420V520" stroke="#e5e5e5" strokeWidth="2" strokeDasharray="2 3" />
        <Circles r={10} color="#dbeaf5" items={[[403, 437, "#cad9e6"], [403, 444], [429, 450, "#cad9e6"], [404, 484], [404, 492], [430, 511], [486, 440], [512, 450, "#cad9e6"], [512, 460], [486, 491, "#cad9e6"], [486, 500], [512, 499]]} />
      </Thumb>
      <Thumb x={40} y={15}>
        <g fill="none" strokeWidth="3.500">
          <path d="M54 50L72 34L103 71L135 44L154 66L184 52" stroke="#fde0c2" /><path d="M58 68L88 70L116 50L134 72L160 84L184 74" stroke="#fdebcf" /><path d="M54 88L73 106L120 84L156 104L184 98" stroke="#cbd9e8" />
        </g>
      </Thumb>
      <Thumb x={210} y={15}>
        <path d="M288 24V126" stroke="#e2e2e2" strokeDasharray="2 3" strokeWidth="2" />
        <g fill="none" strokeWidth="3.500">
          <path d="M220 64L240 66L256 48L278 49M298 60L314 40L330 54L354 52" stroke="#fde0c2" /><path d="M220 76L244 74L258 62L278 66M298 80L324 70L354 78" stroke="#fdebcf" /><path d="M220 104L240 106L256 91L278 92M298 100L316 91L330 99L354 93" stroke="#cbd9e8" />
        </g>
      </Thumb>
      <Thumb x={379} y={15}>
        <path d="M390 24V122M524 24V122" stroke="#ddd" strokeDasharray="2 7" strokeWidth="3" />
        <g fill="none" strokeWidth="3.500">
          <path d="M404 52L428 34L452 56L468 46L494 64L514 48" stroke="#fde0c2" /><path d="M404 78L428 70L452 96L468 88L496 102L514 80" stroke="#cbd9e8" />
        </g>
      </Thumb>
      <Thumb x={40} y={145}>
        <path d="M48 205L82 167L138 206L189 188V253H48Z" fill="#c6d5e4" /><path d="M48 206L82 190L138 226L189 206V253H48Z" fill="#fddbb5" /><path d="M48 228L82 219L138 236L189 221V253H48Z" fill="#fff1e0" />
      </Thumb>
      <Thumb x={210} y={145}>
        <path d="M217 204L236 166L262 204L284 188V253H217ZM291 204L308 166L336 204L357 188V253H291Z" fill="#c6d5e4" /><path d="M217 208L236 190L262 226L284 206V253H217ZM291 208L308 190L336 226L357 206V253H291Z" fill="#fddbb5" /><path d="M217 228L236 219L262 236L284 221V253H217ZM291 228L308 219L336 236L357 221V253H291Z" fill="#fff1e0" />
      </Thumb>
      <Thumb x={379} y={145}>
        <path d="M390 154V252M524 154V252" stroke="#ddd" strokeDasharray="2 7" strokeWidth="3" />
        <Rects items={[[405, 205, 14, 48, "#c6d5e4"], [428, 192, 14, 61, "#c6d5e4"], [450, 217, 15, 36, "#c6d5e4"], [473, 167, 14, 86, "#c6d5e4"], [495, 204, 14, 49, "#c6d5e4"]]} />
        <path d="M410 195L434 174L458 206L480 184L504 202" fill="none" stroke="#fbd9b6" strokeWidth="3.500" />
      </Thumb>
      <Thumb x={40} y={274}>
        <Circles r={10} color="#fbdcc4" items={[[101, 307], [161, 312], [79, 335], [111, 346], [63, 369]]} />
        <path d="M140 282V306M128 294H152M128 313V337M116 325H140M170 331V353M159 342H181M140 347V371M128 359H152M89 349V373M77 361H101" stroke="#bcd9cf" strokeWidth="2.500" />
      </Thumb>
      <Thumb x={210} y={274}>
        <Rects items={[[226, 372, 11, 8, "#c2dfd0"], [240, 360, 11, 20, "#c2dfd0"], [254, 334, 10, 46, "#c2dfd0"], [268, 306, 10, 74, "#c2dfd0"], [282, 294, 10, 86, "#c2dfd0"], [296, 306, 10, 74, "#c2dfd0"], [310, 333, 11, 47, "#c2dfd0"], [324, 359, 11, 21, "#c2dfd0"], [338, 372, 11, 8, "#c2dfd0"]]} />
      </Thumb>
      <Thumb x={379} y={274}>
        <Rects items={[[396, 324, 21, 14, "#98dab4"], [396, 338, 21, 19, "#3fa076"], [430, 310, 20, 24, "#98dab4"], [430, 334, 20, 15, "#3fa076"], [464, 318, 20, 24, "#98dab4"], [464, 342, 20, 20, "#3fa076"], [498, 305, 20, 20, "#98dab4"], [498, 325, 20, 26, "#3fa076"]]} />
        <path d="M406 302V367M400 302H412M400 367H412M440 298V373M434 298H446M434 373H446M474 295V375M468 295H480M468 375H480M508 289V378M502 289H514M502 378H514" stroke="#3b3b3b" strokeWidth="3" />
      </Thumb>
      <Thumb x={40} y={403}>
        <Rects items={[[52, 414, 24, 21, "#c8e5d6"], [97, 414, 8, 21, "#fbd0b3"], [107, 414, 14, 21, "#fde6d0"], [142, 414, 4, 21, "#fbd0b3"], [159, 414, 21, 21, "#fde6d0"], [52, 448, 14, 21, "#d8efe2"], [72, 448, 6, 21, "#c8e5d6"], [90, 448, 12, 21, "#c8e5d6"], [111, 448, 38, 21, "#d8efe2"], [165, 448, 21, 21, "#fbd0b3"], [52, 484, 4, 21, "#c8e5d6"], [67, 484, 20, 21, "#fde6d0"], [93, 484, 5, 21, "#fbd0b3"], [110, 484, 6, 21, "#c8e5d6"], [133, 484, 20, 21, "#c8e5d6"], [170, 484, 10, 21, "#fde6d0"]]} />
      </Thumb>
      <Thumb x={210} y={403}>
        <Rects items={[[222, 418, 130, 18, "#f6faf8"], [222, 453, 115, 18, "#e4f3eb"], [222, 487, 130, 16, "#f6faf8"], [222, 422, 73, 10, "#b9dfcb"], [222, 457, 112, 10, "#b9dfcb"], [222, 490, 61, 10, "#d5eadf"], [301, 417, 3, 21, "#999"], [322, 450, 3, 23, "#888"], [338, 486, 3, 18, "#ccc"]]} />
      </Thumb>
      <Thumb x={379} y={403}>
        <circle cx="420" cy="480" r="27" fill="#92d7ae" /><circle cx="451" cy="434" r="15" fill="#4ba67e" /><circle cx="422" cy="441" r="10" fill="#4ba67e" /><circle cx="477" cy="436" r="9" fill="#92d7ae" /><circle cx="505" cy="450" r="19" fill="#fcb774" /><circle cx="464" cy="464" r="17" fill="#fcb774" /><circle cx="490" cy="479" r="11" fill="#ea8d33" /><circle cx="462" cy="496" r="12" fill="#4ba67e" />
      </Thumb>
    </div>
  );
}

const pill = "flex h-[19px] flex-none items-center justify-center rounded-full pr-[2px] text-[12px] tracking-[0.100px] text-white";

function ShowMe() {
  return (
    <div className="absolute left-[1085px] top-[45px] flex w-[192px] flex-col items-end text-[12px] text-[#333] drop-shadow-[1px_1px_2px_rgba(0,0,0,0.35)]">
      <div className="relative z-10 flex h-[35px] w-[104px] flex-none items-center border-x border-t border-[#e2e2e2] bg-[#fafafa] pb-[7px] pl-[9px] text-[12.800px] tracking-[-0.150px] text-[#4a4a4a]">
        <svg viewBox="0 0 14 14" className="mr-[5px] h-[14px] w-[14px]">
          <path d="M0 0H10.500V3H0Z" fill="#7b668c" /><path d="M0 4H13.500V6.500H0Z" fill="#729bcc" /><path d="M0 7.500H5V10H0Z" fill="#f0a275" /><path d="M0 11.500H8V14H0Z" fill="#ee6a7d" />
        </svg>
        Show Me
      </div>
      <div className="-mt-px flex h-[520px] w-[192px] flex-none flex-col border-x border-b border-[#dadada] bg-[#fafafa] pl-[12px] pt-[14px]">
        <Thumbs />
        <div className="mt-[14px] flex h-[22px] items-center whitespace-pre pl-[2px] tracking-[-0.180px]">For <b className="font-bold text-[#222]">symbol maps</b> try</div>
        <div className="flex h-[25px] items-center pl-[2px]">
          <span className="w-[34px] whitespace-nowrap pt-[3px] tracking-[-0.400px]">1 geo</span><Globe color="#666" />
          <span className={`${pill} ml-[5px] w-[79px] bg-[#4996b2]`}>Dimension</span>
        </div>
        <div className="flex h-[26px] items-center pl-[2px]">
          <span className="w-[54px] whitespace-nowrap pt-[3px] tracking-[-0.050px]">0 or more</span>
          <span className={`${pill} w-[84px] bg-[#4996b2]`}>Dimensions</span>
        </div>
        <div className="flex h-[27px] items-center pl-[2px]">
          <span className="w-[32px] whitespace-nowrap pt-[3px] tracking-[-0.150px]">0 to 2</span>
          <span className={`${pill} w-[74px] bg-[#00b180]`}>Measures</span>
        </div>
        <div className="mt-[8px] whitespace-nowrap pl-[2px] text-[11.500px] leading-[15px] text-[#8f8f8f]">
          May use spatial measure in
          <br />
          place of geo dimension
        </div>
      </div>
    </div>
  );
}

const TABS = [
  ["2022 Economic  freedom score", "w-[180px]", "tracking-[0.060px]"],
  ["Top 40 ranking  countries in th...", "w-[187px]", "tracking-[0.220px]"],
  ["Bottom Ranking  Countries by In...", "w-[188px]", "tracking-[0.060px]"],
  ["Index score based on unemploy...", "w-[187px]", "tracking-[0.020px]"],
  ["Tree map", "w-[63px]", "tracking-[0.100px]"],
  ["horizontai bar chart", "w-[118px]", "tracking-[0.050px]"],
  ["Gantt Bar", "w-[67px]", "tracking-[0.150px]"],
  ["Area chart", "w-[70px]", ""],
];

function SheetTabs() {
  return (
    <div className="flex h-[26px] flex-none border-t border-[#cfcfcf] bg-[#e6e6e6] text-[11.500px] text-[#757575]">
      <div className="flex w-[122px] flex-none items-center pl-[8px] pt-[3px] tracking-[0.150px]">
        <svg viewBox="0 0 10 12" className="mb-[2px] mr-[5px] h-[11px] w-[9px]" fill="none" stroke="#666"><path d="M1 2.500V10C1 11.800 9 11.800 9 10V2.500M1 2.500C1 0.500 9 0.500 9 2.500C9 4 1 4 1 2.500Z" /></svg>
        Data Source
      </div>
      {TABS.map(([t, w, tr], i) => (
        <div
          key={t}
          className={`${w} ${tr} flex flex-none items-center whitespace-pre border-l border-[#cacaca] ${
            i === 1 ? "-mt-px bg-white pl-[4px] pt-[2px] font-bold text-[#4a4a4a]" : "pl-[5px] pt-[3px]"
          }`}
        >
          {t}
        </div>
      ))}
      <div className="flex w-[7px] flex-none items-center overflow-hidden border-l border-[#cacaca] pl-[4px] pt-[3px]">I</div>
      {[
        "M10.500 12.500H1.500V1.500H12.500V8M4.500 10V7M7 10V4.500M9.500 10V6",
        "M8 12.500H1.500V1.500H12.500V8M1.500 7H9M7 1.500V12.500",
        "M7 12C5.500 11 3 11 1.500 11.500V1.800C3 1.300 5.500 1.500 7 2.500C8.500 1.500 11 1.300 12.500 1.800V8M7 2.500V12",
      ].map((d) => (
        <div key={d} className="flex w-[30px] flex-none items-center justify-center border-l border-[#cacaca] pt-[3px]">
          <svg viewBox="0 0 16 16" className="h-[15px] w-[15px]" fill="none" stroke="#666" strokeWidth="1.100">
            <path d={d} />
            <path d="M11.500 8V15.500M7.800 11.700H15.300" stroke="#555" strokeWidth="1.700" />
          </svg>
        </div>
      ))}
    </div>
  );
}

export default function App() {
  return (
    <div className="relative flex h-[660px] w-[1280px] flex-col overflow-hidden bg-[#f4f4f4] font-['Roboto','Liberation_Sans',sans-serif]">
      <TitleBar />
      <MenuBar />
      <Toolbar />
      <div className="flex min-h-0 flex-1">
        <DataPane />
        <Cards />
        <Worksheet />
      </div>
      <SheetTabs />
      <ShowMe />
    </div>
  );
}
